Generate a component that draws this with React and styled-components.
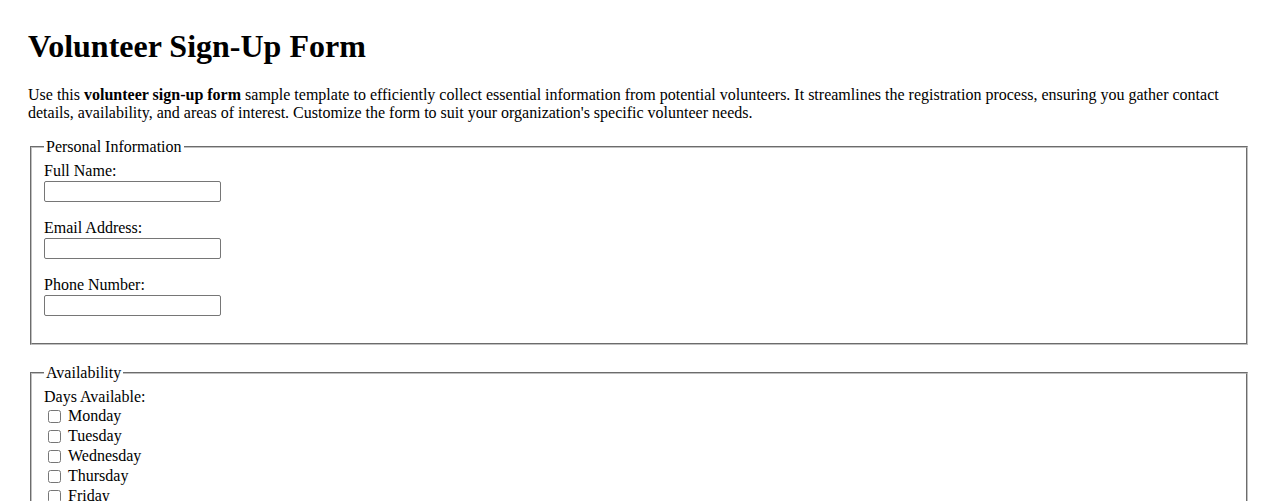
import React from 'react';
import styled, { createGlobalStyle } from 'styled-components';

const GlobalStyle = createGlobalStyle`
  body {
    margin: 0;
    background: #fff;
    color: #000;
    font-family: "Liberation Serif", "Times New Roman", serif;
    font-size: 16px;
  }
`;

const Page = styled.div`
  padding: 28px 28px 40px;
`;

const Title = styled.h1`
  font-size: 32px;
  font-weight: bold;
  margin: 0 0 21px;
  line-height: 37px;
`;

const Intro = styled.p`
  margin: 0 0 16px;
  line-height: 18px;
`;

const Section = styled.fieldset`
  margin: 0 2px 19px;
  padding: 6px 12px 10px;
  border: 2px groove rgb(192, 192, 192);
`;

const Legend = styled.legend`
  padding: 0 2px;
  line-height: 18px;
`;

const Field = styled.div`
  margin-bottom: 17px;
`;

const Label = styled.label`
  display: block;
  line-height: 18px;
`;

const TextInput = styled.input`
  display: block;
  box-sizing: border-box;
  width: 177px;
  height: 21px;
  margin: 1px 0 0;
  padding: 1px 2px;
  border: 1px solid #767676;
  border-radius: 2px;
  font-family: Arial, "Liberation Sans", sans-serif;
  font-size: 13.33px;
`;

const GroupTitle = styled.div`
  line-height: 18px;
`;

const CheckRow = styled.label`
  display: flex;
  align-items: center;
  height: 20px;
  line-height: 18px;
`;

const Check = styled.input`
  width: 13px;
  height: 13px;
  margin: 0 7px 0 4px;
`;

const days = ['Monday', 'Tuesday', 'Wednesday', 'Thursday', 'Friday', 'Saturday', 'Sunday'];

export default function App() {
  return (
    <Page>
      <GlobalStyle />
      <Title>Volunteer Sign-Up Form</Title>
      <Intro>
        Use this <b>volunteer sign-up form</b> sample template to efficiently collect essential
        information from potential volunteers. It streamlines the registration process, ensuring
        you gather contact details, availability, and areas of interest. Customize the form to suit
        your organization's specific volunteer needs.
      </Intro>
      <form>
        <Section>
          <Legend>Personal Information</Legend>
          <Field>
            <Label htmlFor="name">Full Name:</Label>
            <TextInput id="name" type="text" />
          </Field>
          <Field>
            <Label htmlFor="email">Email Address:</Label>
            <TextInput id="email" type="email" />
          </Field>
          <Field>
            <Label htmlFor="phone">Phone Number:</Label>
            <TextInput id="phone" type="tel" />
          </Field>
        </Section>
        <Section>
          <Legend>Availability</Legend>
          <GroupTitle>Days Available:</GroupTitle>
          {days.map((d) => (
            <CheckRow key={d}>
              <Check type="checkbox" name="days" value={d} />
              {d}
            </CheckRow>
          ))}
        </Section>
      </form>
    </Page>
  );
}
